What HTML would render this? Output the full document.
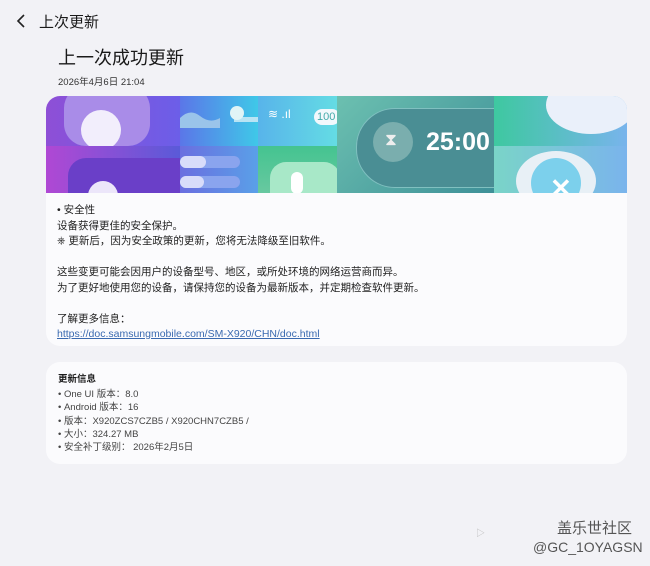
<!DOCTYPE html>
<html><head><meta charset="utf-8"><style>
body{margin:0;width:650px;height:566px;background:#f2f2f6;font-family:"Liberation Sans","Noto Sans CJK SC",sans-serif;color:#1a1a1a;position:relative;overflow:hidden}
.a{position:absolute;white-space:nowrap}
.card{position:absolute;left:46px;width:581px;background:#fbfbfd;border-radius:14px;overflow:hidden}
.t{position:absolute;white-space:nowrap}
.ban{position:absolute;left:0;top:0;width:581px;height:97px;overflow:hidden}
.ban>div{position:absolute;overflow:hidden}
</style></head><body>
<svg class="a" style="left:15px;top:13px" width="12" height="16"><path d="M9 2 L3 8 L9 14" stroke="#222" stroke-width="1.6" fill="none"/></svg>
<div class="a" style="left:39px;top:11px;font-size:15px">上次更新</div>
<div class="a" style="left:58px;top:44px;font-size:18px">上一次成功更新</div>
<div class="a" style="left:58px;top:74px;font-size:9.5px;color:#333">2026年4月6日 21:04</div>

<div class="card" style="top:96px;height:250px">
<div class="ban">
 <div style="left:0;top:0;width:134px;height:50px;background:linear-gradient(90deg,#8e4fd6,#6c5ee8)">
  <div class="t" style="left:18px;top:-10px;width:86px;height:60px;border-radius:22px;background:#a98ce8"></div>
  <div class="t" style="left:35px;top:14px;width:40px;height:40px;border-radius:50%;background:#f2eefc"></div>
 </div>
 <div style="left:0;top:50px;width:134px;height:47px;background:linear-gradient(90deg,#b048d4,#5a5ad8)">
  <div class="t" style="left:22px;top:12px;width:120px;height:50px;border-radius:18px 0 0 0;background:#6a3fc8"></div>
  <div class="t" style="left:42px;top:35px;width:30px;height:30px;border-radius:50%;background:#ece6fa"></div>
 </div>
 <div style="left:134px;top:0;width:78px;height:50px;background:linear-gradient(90deg,#5b76e8,#3fc8e8)">
  <svg class="t" style="left:0;top:8px" width="78" height="24"><path d="M0 14 Q10 4 20 12 T40 14 L40 24 L0 24Z" fill="#9ac4ea"/><rect x="54" y="13" width="24" height="5" fill="#b8e4f4"/></svg>
  <div class="t" style="left:50px;top:10px;width:14px;height:14px;border-radius:50%;background:#e0f4f6"></div>
 </div>
 <div style="left:134px;top:50px;width:78px;height:47px;background:linear-gradient(90deg,#6a6ee0,#5aa0e8)">
  <div class="t" style="left:0;top:10px;width:60px;height:12px;border-radius:6px;background:#8aa4ee"></div>
  <div class="t" style="left:0;top:10px;width:26px;height:12px;border-radius:6px;background:#d8dcfa"></div>
  <div class="t" style="left:0;top:30px;width:60px;height:12px;border-radius:6px;background:#8aa4ee"></div>
  <div class="t" style="left:0;top:30px;width:24px;height:12px;border-radius:6px;background:#d8dcfa"></div>
 </div>
 <div style="left:212px;top:0;width:79px;height:50px;background:linear-gradient(90deg,#58b4ea,#64dce4)">
  <div class="t" style="left:10px;top:11px;font-size:12px;color:#fff">≋ .ıl</div>
  <div class="t" style="left:56px;top:13px;width:26px;height:16px;border-radius:8px;background:#f2f8fc;font-size:11px;color:#4aa;line-height:16px;padding-left:3px;box-sizing:border-box">100</div>
 </div>
 <div style="left:212px;top:50px;width:79px;height:47px;background:linear-gradient(180deg,#44c490,#68c8a0)">
  <div class="t" style="left:12px;top:16px;width:70px;height:50px;border-radius:16px;background:#a8e8c8"></div>
  <div class="t" style="left:33px;top:26px;width:12px;height:22px;border-radius:6px;background:#fff"></div>
 </div>
 <div style="left:291px;top:0;width:157px;height:97px;background:linear-gradient(135deg,#6cc0b0,#3e9098)">
  <div class="t" style="left:19px;top:12px;width:150px;height:78px;border-radius:39px 0 0 39px;background:#4a8e94;border:1px solid #80c0c0"></div>
  <div class="t" style="left:36px;top:26px;width:40px;height:40px;border-radius:50%;background:#7aaeae"></div>
  <div class="t" style="left:48px;top:34px;font-size:17px;color:#eee">⧗</div>
  <div class="t" style="left:89px;top:32px;font-size:25px;font-weight:bold;color:#fff">25:00</div>
 </div>
 <div style="left:448px;top:0;width:133px;height:50px;background:linear-gradient(90deg,#3ec8a0,#78b4ec)">
  <div class="t" style="left:52px;top:-20px;width:90px;height:58px;border-radius:50%;background:#eaf0fa"></div>
 </div>
 <div style="left:448px;top:50px;width:133px;height:47px;background:linear-gradient(90deg,#7ad4c8,#7ab4ec)">
  <div class="t" style="left:22px;top:5px;width:80px;height:60px;border-radius:50%;background:#e8f0f6"></div>
  <div class="t" style="left:37px;top:12px;width:50px;height:50px;border-radius:50%;background:#7cd0ec"></div>
  <div class="t" style="left:56px;top:32px;font-size:26px;color:#fff;font-weight:bold;line-height:20px">✕</div>
 </div>
</div>
 <div class="t" style="font-size:10.5px;line-height:15.5px;left:11px;top:107px;color:#222">• 安全性<br>设备获得更佳的安全保护。<br>⎈ 更新后，因为安全政策的更新，您将无法降级至旧软件。<br><br>这些变更可能会因用户的设备型号、地区，或所处环境的网络运营商而异。<br>为了更好地使用您的设备，请保持您的设备为最新版本，并定期检查软件更新。<br><br>了解更多信息：<br><span style="color:#3a6ab0;text-decoration:underline">https://doc.samsungmobile.com/SM-X920/CHN/doc.html</span></div>
</div>

<div class="card" style="top:362px;height:102px">
 <div class="t" style="left:12px;top:9px;font-size:9.5px;font-weight:bold">更新信息</div>
 <div class="t" style="left:12px;top:26px;font-size:9.5px;line-height:13.3px;color:#444">• One UI 版本：8.0<br>• Android 版本：16<br>• 版本：X920ZCS7CZB5 / X920CHN7CZB5 /<br>• 大小：324.27 MB<br>• 安全补丁级别： 2026年2月5日</div>
</div>

<div class="a" style="left:476px;top:526px;font-size:9px;color:#bbb">▷</div>
<div class="a" style="left:557px;top:517px;font-size:15px;color:#555">盖乐世社区</div>
<div class="a" style="left:533px;top:539px;font-size:14px;color:#555">@GC_1OYAGSN</div>
</body></html>
